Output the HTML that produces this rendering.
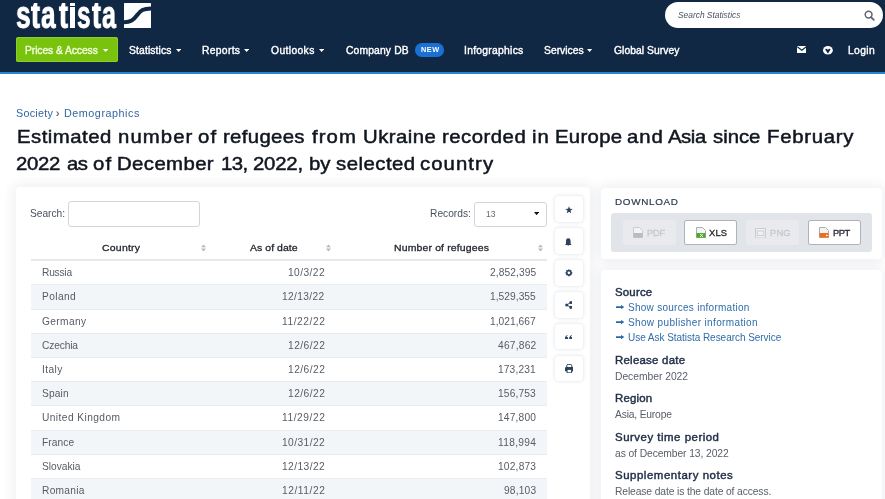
<!DOCTYPE html>
<html><head><meta charset="utf-8">
<style>
*{margin:0;padding:0;box-sizing:border-box}
html,body{width:885px;height:499px;overflow:hidden;background:#fff;font-family:"Liberation Sans",sans-serif}
.a{position:absolute}
.t{position:absolute;white-space:nowrap;line-height:1;will-change:transform}
.lg{top:-4.1px;font-weight:bold;font-size:38px;color:#fff;transform-origin:0 0;-webkit-text-stroke:1.0px #fff}
.rt{font-size:10.2px;color:#575d66}
.rr{text-align:right}
.card{position:absolute;background:#fff;border-radius:4px;box-shadow:0 0 12px 3px rgba(40,60,90,0.075)}
.inp{position:absolute;border:1px solid #d2d5d9;border-radius:3px;background:#fff}
.sort{position:absolute;top:244.4px;width:5px;height:8px}
.ib{position:absolute;left:554.5px;width:28px;height:25.5px;background:#fff;border-radius:4px;box-shadow:0 0 3px 1px rgba(40,60,90,0.10)}
.dl{position:absolute;top:220.2px;width:52.8px;height:25.2px;border-radius:2.5px}
</style></head><body>
<div class="a" style="left:0;top:0;width:885px;height:72px;background:#112844"></div>
<div class="a" style="left:0;top:72px;width:885px;height:2px;background:#2683d6"></div>
<div class="t lg" style="left:15.61px;transform:scaleX(0.688);">s</div>
<div class="t lg" style="left:30.7px;transform:scaleX(0.713);clip-path:inset(7px -6px -6px -6px);">t</div>
<div class="t lg" style="left:41.32px;transform:scaleX(0.692);">a</div>
<div class="t lg" style="left:58.5px;transform:scaleX(0.713);clip-path:inset(7px -6px -6px -6px);">t</div>
<div class="a" style="left:70px;top:2.9px;width:4.6px;height:3.4px;background:#fff;border-radius:0.3px"></div>
<div class="a" style="left:70px;top:7.2px;width:4.6px;height:21px;background:#fff"></div>
<div class="t lg" style="left:76.76px;transform:scaleX(0.636);">s</div>
<div class="t lg" style="left:91.8px;transform:scaleX(0.713);clip-path:inset(7px -6px -6px -6px);">t</div>
<div class="t lg" style="left:102.36px;transform:scaleX(0.659);">a</div>
<svg class="a" style="left:124px;top:2.7px" width="27" height="25.3" viewBox="0 0 27 25.3">
<rect x="0" y="0" width="27" height="25.3" fill="#fff" rx="0.6"/>
<path d="M-1,19.3 C7,19.3 9.5,17 13,12.3 S19,5.4 28,5.4" stroke="#112844" stroke-width="4" fill="none"/>
</svg>
<div class="a" style="left:665.4px;top:1.8px;width:217.6px;height:26.5px;background:#fff;border-radius:13.3px"></div>
<div class="t" style="left:678px;top:10.5px;font-size:8.4px;font-style:italic;color:#4a5462">Search Statistics</div>
<svg class="a" style="left:864px;top:10px" width="11" height="11" viewBox="0 0 11 11"><circle cx="4.6" cy="4.6" r="3.4" stroke="#5d6572" stroke-width="1.5" fill="none"/><path d="M7.1,7.1 L9.8,9.8" stroke="#5d6572" stroke-width="1.8" stroke-linecap="round"/></svg>
<div class="a" style="left:16.3px;top:37.1px;width:101.6px;height:24.9px;background:#79c30e;border-radius:2.5px;box-shadow:inset 0 0 0 1px #8ad02a"></div>
<div class="t" style="left:25.14px;top:45.65px;font-size:10.3px;letter-spacing:-0.071px;color:#f0fcdc;-webkit-text-stroke:0.38px;">Prices &amp; Access</div>
<svg class="a" style="left:103.2px;top:48.8px" width="5.2" height="3" viewBox="0 0 5.2 3"><path d="M0,0 L5.2,0 L2.6,3Z" fill="#fff"/></svg>
<div class="t" style="left:129.0px;top:45.65px;font-size:10.3px;letter-spacing:0.141px;color:#fff;-webkit-text-stroke:0.38px;">Statistics</div><svg class="a" style="left:175.6px;top:48.8px" width="5.2" height="3" viewBox="0 0 5.2 3"><path d="M0,0 L5.2,0 L2.6,3Z" fill="#fff"/></svg>
<div class="t" style="left:202.34px;top:45.65px;font-size:10.3px;letter-spacing:0.325px;color:#fff;-webkit-text-stroke:0.38px;">Reports</div><svg class="a" style="left:244.2px;top:48.8px" width="5.2" height="3" viewBox="0 0 5.2 3"><path d="M0,0 L5.2,0 L2.6,3Z" fill="#fff"/></svg>
<div class="t" style="left:271.41px;top:45.65px;font-size:10.3px;letter-spacing:0.377px;color:#fff;-webkit-text-stroke:0.38px;">Outlooks</div><svg class="a" style="left:318.6px;top:48.8px" width="5.2" height="3" viewBox="0 0 5.2 3"><path d="M0,0 L5.2,0 L2.6,3Z" fill="#fff"/></svg>
<div class="t" style="left:345.75px;top:45.65px;font-size:10.3px;letter-spacing:0.151px;color:#fff;-webkit-text-stroke:0.38px;">Company DB</div>
<div class="a" style="left:414.8px;top:43.4px;width:29.6px;height:13.6px;background:#1a70d4;border-radius:6.8px"></div>
<div class="t" style="left:420.7px;top:46.4px;font-size:7.3px;font-weight:bold;color:#fff;letter-spacing:0.5px">NEW</div>
<div class="t" style="left:464.47px;top:45.65px;font-size:10.3px;letter-spacing:0.288px;color:#fff;-webkit-text-stroke:0.38px;">Infographics</div>
<div class="t" style="left:543.8px;top:45.65px;font-size:10.3px;letter-spacing:0.022px;color:#fff;-webkit-text-stroke:0.38px;">Services</div><svg class="a" style="left:587.4px;top:48.8px" width="5.2" height="3" viewBox="0 0 5.2 3"><path d="M0,0 L5.2,0 L2.6,3Z" fill="#fff"/></svg>
<div class="t" style="left:614.35px;top:45.65px;font-size:10.3px;letter-spacing:0.064px;color:#fff;-webkit-text-stroke:0.38px;">Global Survey</div>
<svg class="a" style="left:796.6px;top:46.2px" width="9.6" height="7.2" viewBox="0 0 9.6 7.2"><rect x="0" y="0" width="9.6" height="7.2" rx="0.8" fill="#fff"/><path d="M0.3,0.8 L4.8,4.2 L9.3,0.8" stroke="#112844" stroke-width="1.1" fill="none"/></svg>
<svg class="a" style="left:822.8px;top:46px" width="9.8" height="8.6" viewBox="0 0 9.8 8.6"><ellipse cx="4.9" cy="4.3" rx="4.9" ry="4.3" fill="#fff"/><path d="M2.3,3.3 C3.3,2.4 4.3,3 4.9,4 C5.5,3 6.5,2.4 7.5,3.3 C7.2,4.8 5.8,5.5 5.3,7.3 L4.5,7.3 C4,5.5 2.6,4.8 2.3,3.3Z" fill="#112844"/></svg>
<div class="t" style="left:847.76px;top:45.65px;font-size:10.3px;letter-spacing:0.364px;color:#fff;-webkit-text-stroke:0.38px;">Login</div>

<div class="t" style="left:15.8px;top:107.69px;font-size:10.8px;letter-spacing:0.233px;color:#33679f;;">Society</div>
<div class="t" style="left:56.0px;top:107.6px;font-size:10.5px;color:#4b5566;-webkit-text-stroke:0.2px">&#8250;</div>
<div class="t" style="left:64.11px;top:107.69px;font-size:10.8px;letter-spacing:0.518px;color:#33679f;;">Demographics</div>
<div class="t" style="left:16.59px;top:127.35px;font-size:19.0px;letter-spacing:0.448px;color:#10161f;-webkit-text-stroke:0.5px;transform-origin:0 0;transform:scaleX(1.07);">Estimated</div><div class="t" style="left:117.52px;top:127.35px;font-size:19.0px;letter-spacing:1.0px;color:#10161f;-webkit-text-stroke:0.5px;transform-origin:0 0;transform:scaleX(1.07);">number</div><div class="t" style="left:198.28px;top:127.35px;font-size:19.0px;letter-spacing:1.0px;color:#10161f;-webkit-text-stroke:0.5px;transform-origin:0 0;transform:scaleX(1.07);">of</div><div class="t" style="left:222.55px;top:127.35px;font-size:19.0px;letter-spacing:0.323px;color:#10161f;-webkit-text-stroke:0.5px;transform-origin:0 0;transform:scaleX(1.07);">refugees</div><div class="t" style="left:312.08px;top:127.35px;font-size:19.0px;letter-spacing:1.0px;color:#10161f;-webkit-text-stroke:0.5px;transform-origin:0 0;transform:scaleX(1.07);">from</div><div class="t" style="left:362.55px;top:127.35px;font-size:19.0px;letter-spacing:0.428px;color:#10161f;-webkit-text-stroke:0.5px;transform-origin:0 0;transform:scaleX(1.07);">Ukraine</div><div class="t" style="left:442.45px;top:127.35px;font-size:19.0px;letter-spacing:0.46px;color:#10161f;-webkit-text-stroke:0.5px;transform-origin:0 0;transform:scaleX(1.07);">recorded</div><div class="t" style="left:532.24px;top:127.35px;font-size:19.0px;letter-spacing:1.0px;color:#10161f;-webkit-text-stroke:0.5px;transform-origin:0 0;transform:scaleX(1.07);">in</div><div class="t" style="left:554.79px;top:127.35px;font-size:19.0px;letter-spacing:0.284px;color:#10161f;-webkit-text-stroke:0.5px;transform-origin:0 0;transform:scaleX(1.07);">Europe</div><div class="t" style="left:627.28px;top:127.35px;font-size:19.0px;letter-spacing:0.875px;color:#10161f;-webkit-text-stroke:0.5px;transform-origin:0 0;transform:scaleX(1.07);">and</div><div class="t" style="left:668.49px;top:127.35px;font-size:19.0px;letter-spacing:-0.422px;color:#10161f;-webkit-text-stroke:0.5px;transform-origin:0 0;transform:scaleX(1.07);">Asia</div><div class="t" style="left:713.37px;top:127.35px;font-size:19.0px;letter-spacing:-0.017px;color:#10161f;-webkit-text-stroke:0.5px;transform-origin:0 0;transform:scaleX(1.07);">since</div><div class="t" style="left:766.69px;top:127.35px;font-size:19.0px;letter-spacing:0.666px;color:#10161f;-webkit-text-stroke:0.5px;transform-origin:0 0;transform:scaleX(1.07);">February</div><div class="t" style="left:16.45px;top:153.55px;font-size:19.0px;letter-spacing:-0.302px;color:#10161f;-webkit-text-stroke:0.5px;transform-origin:0 0;transform:scaleX(1.07);">2022</div><div class="t" style="left:66.68px;top:153.55px;font-size:19.0px;letter-spacing:-0.5px;color:#10161f;-webkit-text-stroke:0.5px;transform-origin:0 0;transform:scaleX(1.07);">as</div><div class="t" style="left:92.88px;top:153.55px;font-size:19.0px;letter-spacing:1.0px;color:#10161f;-webkit-text-stroke:0.5px;transform-origin:0 0;transform:scaleX(1.07);">of</div><div class="t" style="left:117.19px;top:153.55px;font-size:19.0px;letter-spacing:0.381px;color:#10161f;-webkit-text-stroke:0.5px;transform-origin:0 0;transform:scaleX(1.07);">December</div><div class="t" style="left:220.98px;top:153.55px;font-size:19.0px;letter-spacing:-0.5px;color:#10161f;-webkit-text-stroke:0.5px;transform-origin:0 0;transform:scaleX(1.07);">13,</div><div class="t" style="left:253.05px;top:153.55px;font-size:19.0px;letter-spacing:-0.186px;color:#10161f;-webkit-text-stroke:0.5px;transform-origin:0 0;transform:scaleX(1.07);">2022,</div><div class="t" style="left:308.86px;top:153.55px;font-size:19.0px;letter-spacing:-0.112px;color:#10161f;-webkit-text-stroke:0.5px;transform-origin:0 0;transform:scaleX(1.07);">by</div><div class="t" style="left:336.17px;top:153.55px;font-size:19.0px;letter-spacing:0.452px;color:#10161f;-webkit-text-stroke:0.5px;transform-origin:0 0;transform:scaleX(1.07);">selected</div><div class="t" style="left:420.13px;top:153.55px;font-size:19.0px;letter-spacing:1.0px;color:#10161f;-webkit-text-stroke:0.5px;transform-origin:0 0;transform:scaleX(1.07);">country</div>

<div class="card" style="left:16.2px;top:187.4px;width:573.5px;height:340px"></div>
<div class="t" style="left:30.34px;top:209.14px;font-size:10.2px;letter-spacing:-0.015px;color:#48525f;;">Search:</div>
<div class="inp" style="left:68.2px;top:201.4px;width:131.6px;height:25.2px"></div>
<div class="t" style="left:429.77px;top:209.14px;font-size:10.2px;letter-spacing:0.02px;color:#48525f;;">Records:</div>
<div class="inp" style="left:473.5px;top:201.6px;width:73px;height:25px"></div>
<div class="t" style="left:485.8px;top:210.2px;font-size:8.6px;color:#646a73">13</div>
<svg class="a" style="left:533.8px;top:212px" width="5.2" height="3.2" viewBox="0 0 5.2 3.2"><path d="M0,0 L5.2,0 L2.6,3.2Z" fill="#111"/></svg>
<div class="t" style="left:101.71px;top:242.93px;font-size:9.9px;letter-spacing:0.212px;color:#1f232a;-webkit-text-stroke:0.3px;transform-origin:0 0;transform:scaleX(1.06);">Country</div>
<div class="t" style="left:249.87px;top:242.93px;font-size:9.9px;letter-spacing:0.048px;color:#1f232a;-webkit-text-stroke:0.3px;transform-origin:0 0;transform:scaleX(1.06);">As of date</div>
<div class="t" style="left:393.69px;top:242.93px;font-size:9.9px;letter-spacing:0.134px;color:#1f232a;-webkit-text-stroke:0.3px;transform-origin:0 0;transform:scaleX(1.06);">Number of refugees</div>
<svg class="sort" style="left:201px" viewBox="0 0 5 8"><path d="M0,3.2 L2.5,0.4 L5,3.2Z M0,4.6 L2.5,7.4 L5,4.6Z" fill="#b5b8bd"/></svg>
<svg class="sort" style="left:325.8px" viewBox="0 0 5 8"><path d="M0,3.2 L2.5,0.4 L5,3.2Z M0,4.6 L2.5,7.4 L5,4.6Z" fill="#b5b8bd"/></svg>
<svg class="sort" style="left:537.6px" viewBox="0 0 5 8"><path d="M0,3.2 L2.5,0.4 L5,3.2Z M0,4.6 L2.5,7.4 L5,4.6Z" fill="#b5b8bd"/></svg>
<div class="a" style="left:31px;top:258.8px;width:515.5px;height:2.2px;background:#e6e7e9"></div>
<div class="a" style="left:31px;top:260.20px;width:515.5px;height:24.40px;background:#ffffff;border-top:1px solid #e9ecef"></div>
<div class="a" style="left:31px;top:284.40px;width:515.5px;height:24.40px;background:#f3f6f9;border-top:1px solid #e9ecef"></div>
<div class="a" style="left:31px;top:308.60px;width:515.5px;height:24.40px;background:#ffffff;border-top:1px solid #e9ecef"></div>
<div class="a" style="left:31px;top:332.80px;width:515.5px;height:24.40px;background:#f3f6f9;border-top:1px solid #e9ecef"></div>
<div class="a" style="left:31px;top:357.00px;width:515.5px;height:24.40px;background:#ffffff;border-top:1px solid #e9ecef"></div>
<div class="a" style="left:31px;top:381.20px;width:515.5px;height:24.40px;background:#f3f6f9;border-top:1px solid #e9ecef"></div>
<div class="a" style="left:31px;top:405.40px;width:515.5px;height:24.40px;background:#ffffff;border-top:1px solid #e9ecef"></div>
<div class="a" style="left:31px;top:429.60px;width:515.5px;height:24.40px;background:#f3f6f9;border-top:1px solid #e9ecef"></div>
<div class="a" style="left:31px;top:453.80px;width:515.5px;height:24.40px;background:#ffffff;border-top:1px solid #e9ecef"></div>
<div class="a" style="left:31px;top:478.00px;width:515.5px;height:24.40px;background:#f3f6f9;border-top:1px solid #e9ecef"></div>
<div class="t" style="left:41.87px;top:268.14px;font-size:10.2px;letter-spacing:-0.213px;color:#575c63;;">Russia</div>
<div class="t" style="left:288.06px;top:268.14px;font-size:10.2px;letter-spacing:0.438px;color:#575c63;;">10/3/22</div>
<div class="t" style="left:489.59px;top:268.14px;font-size:10.2px;letter-spacing:0.102px;color:#575c63;;">2,852,395</div>
<div class="t" style="left:41.87px;top:292.34px;font-size:10.2px;letter-spacing:0.389px;color:#575c63;;">Poland</div>
<div class="t" style="left:282.37px;top:292.34px;font-size:10.2px;letter-spacing:0.36px;color:#575c63;;">12/13/22</div>
<div class="t" style="left:489.96px;top:292.34px;font-size:10.2px;letter-spacing:0.051px;color:#575c63;;">1,529,355</div>
<div class="t" style="left:42.14px;top:316.54px;font-size:10.2px;letter-spacing:0.372px;color:#575c63;;">Germany</div>
<div class="t" style="left:282.07px;top:316.54px;font-size:10.2px;letter-spacing:0.559px;color:#575c63;;">11/22/22</div>
<div class="t" style="left:489.98px;top:316.54px;font-size:10.2px;letter-spacing:0.049px;color:#575c63;;">1,021,667</div>
<div class="t" style="left:42.16px;top:340.74px;font-size:10.2px;letter-spacing:-0.142px;color:#575c63;;">Czechia</div>
<div class="t" style="left:287.78px;top:340.74px;font-size:10.2px;letter-spacing:0.467px;color:#575c63;;">12/6/22</div>
<div class="t" style="left:497.73px;top:340.74px;font-size:10.2px;letter-spacing:0.228px;color:#575c63;;">467,862</div>
<div class="t" style="left:41.6px;top:364.94px;font-size:10.2px;letter-spacing:0.421px;color:#575c63;;">Italy</div>
<div class="t" style="left:287.78px;top:364.94px;font-size:10.2px;letter-spacing:0.467px;color:#575c63;;">12/6/22</div>
<div class="t" style="left:498.06px;top:364.94px;font-size:10.2px;letter-spacing:0.137px;color:#575c63;;">173,231</div>
<div class="t" style="left:41.94px;top:389.14px;font-size:10.2px;letter-spacing:0.162px;color:#575c63;;">Spain</div>
<div class="t" style="left:287.78px;top:389.14px;font-size:10.2px;letter-spacing:0.467px;color:#575c63;;">12/6/22</div>
<div class="t" style="left:498.08px;top:389.14px;font-size:10.2px;letter-spacing:0.152px;color:#575c63;;">156,753</div>
<div class="t" style="left:41.92px;top:413.34px;font-size:10.2px;letter-spacing:0.421px;color:#575c63;;">United Kingdom</div>
<div class="t" style="left:282.07px;top:413.34px;font-size:10.2px;letter-spacing:0.559px;color:#575c63;;">11/29/22</div>
<div class="t" style="left:497.96px;top:413.34px;font-size:10.2px;letter-spacing:0.195px;color:#575c63;;">147,800</div>
<div class="t" style="left:41.87px;top:437.54px;font-size:10.2px;letter-spacing:0.09px;color:#575c63;;">France</div>
<div class="t" style="left:282.06px;top:437.54px;font-size:10.2px;letter-spacing:0.445px;color:#575c63;;">10/31/22</div>
<div class="t" style="left:497.96px;top:437.54px;font-size:10.2px;letter-spacing:0.297px;color:#575c63;;">118,994</div>
<div class="t" style="left:41.94px;top:461.74px;font-size:10.2px;letter-spacing:-0.013px;color:#575c63;;">Slovakia</div>
<div class="t" style="left:282.06px;top:461.74px;font-size:10.2px;letter-spacing:0.445px;color:#575c63;;">12/13/22</div>
<div class="t" style="left:497.97px;top:461.74px;font-size:10.2px;letter-spacing:0.202px;color:#575c63;;">102,873</div>
<div class="t" style="left:41.87px;top:485.94px;font-size:10.2px;letter-spacing:0.286px;color:#575c63;;">Romania</div>
<div class="t" style="left:282.08px;top:485.94px;font-size:10.2px;letter-spacing:0.559px;color:#575c63;;">12/11/22</div>
<div class="t" style="left:503.96px;top:485.94px;font-size:10.2px;letter-spacing:0.196px;color:#575c63;;">98,103</div>
<div class="ib" style="top:196.0px"></div>
<div class="ib" style="top:228.3px"></div>
<div class="ib" style="top:260.3px"></div>
<div class="ib" style="top:292.1px"></div>
<div class="ib" style="top:323.9px"></div>
<div class="ib" style="top:355.6px"></div>
<svg class="a" style="left:564.6px;top:205.9px" width="8" height="7.6" viewBox="0 0 10 9.5"><path d="M5,0.2 L6.2,3.5 L9.7,3.6 L6.9,5.7 L7.9,9.2 L5,7.2 L2.1,9.2 L3.1,5.7 L0.3,3.6 L3.8,3.5Z" fill="#2c4060"/></svg>
<svg class="a" style="left:565.4px;top:237.5px" width="6.6" height="8.6" viewBox="0 0 6.6 8.6"><path d="M3.3,0.2 C5.2,0.2 5.6,1.8 5.6,3.6 L5.6,5.6 L6.6,7 L0,7 L1,5.6 L1,3.6 C1,1.8 1.4,0.2 3.3,0.2Z M2.5,7.4 L4.1,7.4 C4.1,8.6 2.5,8.6 2.5,7.4Z" fill="#2c4060"/></svg>
<svg class="a" style="left:565px;top:269.3px" width="7.8" height="7.6" viewBox="0 0 10 10"><path d="M5,0.6 L5,9.4 M0.6,5 L9.4,5 M1.9,1.9 L8.1,8.1 M8.1,1.9 L1.9,8.1" stroke="#2c4060" stroke-width="2.2"/><circle cx="5" cy="5" r="3.5" fill="#2c4060"/><circle cx="5" cy="5" r="1.8" fill="#fff"/></svg>
<svg class="a" style="left:564.8px;top:300.9px" width="7.6" height="7.9" viewBox="0 0 9 9.4"><circle cx="7" cy="1.8" r="1.8" fill="#2c4060"/><circle cx="2" cy="4.7" r="1.8" fill="#2c4060"/><circle cx="7" cy="7.6" r="1.8" fill="#2c4060"/><path d="M7,1.8 L2,4.7 L7,7.6" stroke="#2c4060" stroke-width="1.1" fill="none"/></svg>
<svg class="a" style="left:564.8px;top:334.6px" width="7.6" height="4.9" viewBox="0 0 7.6 4.9"><circle cx="1.6" cy="3.3" r="1.6" fill="#2c4060"/><path d="M0.1,3.2 C0.1,1.6 1,0.4 2.4,0 L2.7,0.6 C1.9,1 1.5,1.8 1.6,2.4Z" fill="#2c4060"/><circle cx="5.9" cy="3.3" r="1.6" fill="#2c4060"/><path d="M4.4,3.2 C4.4,1.6 5.3,0.4 6.7,0 L7,0.6 C6.2,1 5.8,1.8 5.9,2.4Z" fill="#2c4060"/></svg>
<svg class="a" style="left:564.6px;top:363.6px" width="8.6" height="9.3" viewBox="0 0 8.6 9.3"><path d="M1.8,3.2 L1.8,1.6 C1.8,0.7 2.4,0.4 3.2,0.4 L5.4,0.4 C6.2,0.4 6.8,0.7 6.8,1.6 L6.8,3.2" stroke="#2c4060" stroke-width="1" fill="none"/><rect x="0" y="3" width="8.6" height="4.4" rx="1.2" fill="#2c4060"/><rect x="2.1" y="5.4" width="4.4" height="3.4" fill="#fff" stroke="#2c4060" stroke-width="0.9"/></svg>

<div class="card" style="left:601px;top:187.6px;width:281.4px;height:71.4px"></div>
<div class="t" style="left:614.87px;top:197.12px;font-size:9.9px;letter-spacing:0.681px;color:#2c3a4e;-webkit-text-stroke:0.2px;">DOWNLOAD</div>
<div class="a" style="left:611.3px;top:213px;width:260.8px;height:39px;background:#e1e4e8;border-radius:3px"></div>
<div class="dl" style="left:622.9px;background:#e8eaed"></div>
<div class="dl" style="left:684.3px;background:#fff;box-shadow:inset 0 0 0 1px #aeb3ba"></div>
<div class="dl" style="left:746.2px;background:#e8eaed"></div>
<div class="dl" style="left:807.9px;background:#fff;box-shadow:inset 0 0 0 1px #aeb3ba"></div>
<div class="t" style="left:647.34px;top:228.73px;font-size:9.3px;letter-spacing:-0.154px;color:#c6c9ce;-webkit-text-stroke:0.35px;">PDF</div>
<div class="t" style="left:709.49px;top:228.73px;font-size:9.3px;letter-spacing:0.207px;color:#2a2e35;-webkit-text-stroke:0.35px;">XLS</div>
<div class="t" style="left:770.24px;top:228.73px;font-size:9.3px;letter-spacing:0.201px;color:#c6c9ce;-webkit-text-stroke:0.35px;">PNG</div>
<div class="t" style="left:833.33px;top:228.73px;font-size:9.3px;letter-spacing:-0.433px;color:#2a2e35;-webkit-text-stroke:0.35px;">PPT</div>
<svg class="a" style="left:633.1px;top:226.9px" width="10" height="11.2" viewBox="0 0 10 11.2"><path d="M0.5,0.5 L6.5,0.5 L9.5,3.5 L9.5,10.7 L0.5,10.7Z" fill="#f2f3f5" stroke="#c9ccd0" stroke-width="1"/><rect x="0.5" y="6" width="9" height="4.7" fill="#b9bcc1"/></svg>
<svg class="a" style="left:695.5px;top:226.9px" width="10" height="11.2" viewBox="0 0 10 11.2"><path d="M0.5,0.5 L6.5,0.5 L9.5,3.5 L9.5,10.7 L0.5,10.7Z" fill="#f4f4f4" stroke="#a9adb3" stroke-width="1"/><rect x="0.5" y="6" width="9" height="4.7" fill="#4ea62a"/><path d="M4,6.8 L7,10 M7,6.8 L4,10" stroke="#fff" stroke-width="0.9"/></svg>
<svg class="a" style="left:754.6px;top:227.6px" width="11" height="10.5" viewBox="0 0 11 10.5"><rect x="0.5" y="0.5" width="10" height="9.5" fill="#eef0f2" stroke="#c9ccd0" stroke-width="1"/><rect x="2.2" y="3" width="6.6" height="4.5" fill="none" stroke="#c9ccd0" stroke-width="0.9"/></svg>
<svg class="a" style="left:818.8px;top:226.9px" width="10" height="11.2" viewBox="0 0 10 11.2"><path d="M0.5,0.5 L6.5,0.5 L9.5,3.5 L9.5,10.7 L0.5,10.7Z" fill="#f4f4f4" stroke="#a9adb3" stroke-width="1"/><rect x="0.5" y="6" width="9" height="4.7" fill="#e8701f"/><path d="M7,7.5 L9.5,8.4 L7,9.3Z" fill="#fff"/></svg>

<div class="card" style="left:601px;top:269.7px;width:281.4px;height:260px"></div>
<div class="t" style="left:615.03px;top:286.65px;font-size:10.7px;letter-spacing:0.178px;color:#223149;-webkit-text-stroke:0.42px;transform-origin:0 0;transform:scaleX(1.07);">Source</div>
<svg class="a" style="left:615.6px;top:305.20px" width="8.4" height="4.2" viewBox="0 0 8.4 4.2"><path d="M0,1.25 L5,1.25 L5,0 L8.4,2.1 L5,4.2 L5,2.95 L0,2.95Z" fill="#2b69a6"/></svg>
<div class="t" style="left:627.94px;top:303.37px;font-size:10.0px;letter-spacing:0.275px;color:#2f6da8;;">Show sources information</div>
<svg class="a" style="left:615.6px;top:320.15px" width="8.4" height="4.2" viewBox="0 0 8.4 4.2"><path d="M0,1.25 L5,1.25 L5,0 L8.4,2.1 L5,4.2 L5,2.95 L0,2.95Z" fill="#2b69a6"/></svg>
<div class="t" style="left:627.95px;top:318.37px;font-size:10.0px;letter-spacing:0.359px;color:#2f6da8;;">Show publisher information</div>
<svg class="a" style="left:615.6px;top:335.10px" width="8.4" height="4.2" viewBox="0 0 8.4 4.2"><path d="M0,1.25 L5,1.25 L5,0 L8.4,2.1 L5,4.2 L5,2.95 L0,2.95Z" fill="#2b69a6"/></svg>
<div class="t" style="left:627.94px;top:333.37px;font-size:10.0px;letter-spacing:-0.038px;color:#2f6da8;;">Use Ask Statista Research Service</div>
<div class="t" style="left:615.23px;top:355.45px;font-size:10.7px;letter-spacing:0.224px;color:#223149;-webkit-text-stroke:0.42px;transform-origin:0 0;transform:scaleX(1.07);">Release date</div>
<div class="t" style="left:615.23px;top:393.25px;font-size:10.7px;letter-spacing:0.171px;color:#223149;-webkit-text-stroke:0.42px;transform-origin:0 0;transform:scaleX(1.07);">Region</div>
<div class="t" style="left:615.23px;top:432.05px;font-size:10.7px;letter-spacing:0.475px;color:#223149;-webkit-text-stroke:0.42px;transform-origin:0 0;transform:scaleX(1.07);">Survey time period</div>
<div class="t" style="left:615.23px;top:470.45px;font-size:10.7px;letter-spacing:0.505px;color:#223149;-webkit-text-stroke:0.42px;transform-origin:0 0;transform:scaleX(1.07);">Supplementary notes</div>
<div class="t" style="left:615.06px;top:372.01px;font-size:10.3px;letter-spacing:-0.019px;color:#585e67;;">December 2022</div>
<div class="t" style="left:615.28px;top:409.81px;font-size:10.3px;letter-spacing:-0.186px;color:#585e67;;">Asia, Europe</div>
<div class="t" style="left:615.31px;top:448.91px;font-size:10.3px;letter-spacing:-0.09px;color:#585e67;;">as of December 13, 2022</div>
<div class="t" style="left:614.96px;top:486.71px;font-size:10.3px;letter-spacing:-0.117px;color:#585e67;;">Release date is the date of access.</div>
</body></html>
